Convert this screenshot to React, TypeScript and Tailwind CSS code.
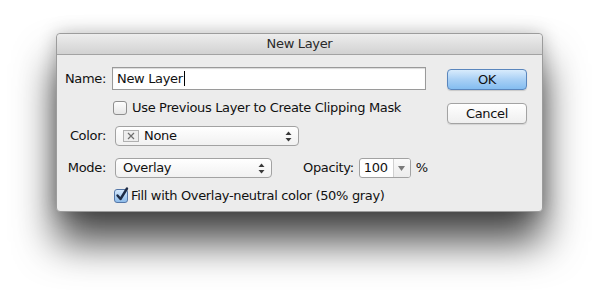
import React from 'react';

const font = { fontFamily: '"Lucida Grande", "DejaVu Sans", sans-serif' };

const Stepper: React.FC = () => (
    <svg width="7" height="11" viewBox="0 0 7 11" className="shrink-0">
        <path d="M3.5 0.5 L6.5 4 L0.5 4 Z" fill="#3a3a3a" />
        <path d="M3.5 10.5 L6.5 7 L0.5 7 Z" fill="#3a3a3a" />
    </svg>
);

const Checkbox: React.FC<{ checked?: boolean }> = ({ checked }) => {
    if (checked) {
        return (
            <div className="relative w-[14px] h-[14px] shrink-0 rounded-[3px] border border-[#5577a8] bg-gradient-to-b from-[#d5e8fb] to-[#8dbbe9]">
                <svg width="16" height="16" viewBox="0 0 16 16" className="absolute -top-[4px] left-[0px]">
                    <path d="M2.5 9.5 L5.5 13 L12 2.5" fill="none" stroke="#1d2b45" strokeWidth="2.4" strokeLinecap="round" strokeLinejoin="round" />
                </svg>
            </div>
        );
    }
    return (
        <div className="w-[14px] h-[14px] shrink-0 rounded-[3px] border border-[#8e8e8e] bg-gradient-to-b from-[#fdfdfd] to-[#e6e6e6]" />
    );
};

export default function App() {
    return (
        <div className="w-[600px] h-[290px] bg-white overflow-hidden pt-[33px] pl-[56px] text-[13px] tracking-[-0.33px] text-[#111]" style={font}>
            <div className="w-[487px] h-[179px] flex flex-col bg-[#ececec] border border-[#9c9c9c] rounded-[4px] shadow-[0_30px_40px_rgba(0,0,0,0.72),0_0_18px_rgba(0,0,0,0.22)]">
                {/* title bar */}
                <div className="h-[21px] shrink-0 flex items-center justify-center rounded-t-[4px] border-b border-[#a3a3a3] bg-gradient-to-b from-[#ededed] to-[#d2d2d2] text-[#2a2a2a]">
                    New Layer
                </div>

                <div className="flex flex-1">
                    {/* form */}
                    <div className="flex flex-col pt-[12px]">
                        <div className="flex items-center h-[23px]">
                            <span className="w-[49px] text-right">Name:</span>
                            <div className="ml-[6px] w-[314px] h-[23px] bg-white border border-[#9a9a9a] shadow-[inset_0_1px_1px_rgba(0,0,0,0.15)] flex items-center pl-[4px]">
                                New Layer<span className="w-[1px] h-[15px] bg-black ml-[1px]" />
                            </div>
                        </div>

                        <div className="flex items-center h-[16px] mt-[10px] pl-[56px] gap-[5px]">
                            <Checkbox />
                            <span>Use Previous Layer to Create Clipping Mask</span>
                        </div>

                        <div className="flex items-center h-[20px] mt-[10px]">
                            <span className="w-[49px] text-right">Color:</span>
                            <div className="ml-[9px] w-[184px] h-[20px] rounded-[4px] border border-[#a2a2a2] bg-gradient-to-b from-white to-[#f1f1f1] flex items-center pl-[7px] pr-[6px]">
                                <div className="w-[16px] h-[12px] border border-[#b0b0b0] bg-[#ededed] flex items-center justify-center">
                                    <svg width="8" height="8" viewBox="0 0 8 8">
                                        <path d="M1 1 L7 7 M7 1 L1 7" stroke="#6e6e6e" strokeWidth="1.2" />
                                    </svg>
                                </div>
                                <span className="ml-[5px] flex-1">None</span>
                                <Stepper />
                            </div>
                        </div>

                        <div className="flex items-center h-[20px] mt-[12px]">
                            <span className="w-[49px] text-right">Mode:</span>
                            <div className="ml-[9px] w-[157px] h-[20px] rounded-[4px] border border-[#a2a2a2] bg-gradient-to-b from-white to-[#f1f1f1] flex items-center pl-[7px] pr-[6px]">
                                <span className="flex-1">Overlay</span>
                                <Stepper />
                            </div>
                            <span className="ml-[31px]">Opacity:</span>
                            <div className="ml-[5px] w-[52px] h-[20px] rounded-[3px] border border-[#a2a2a2] bg-white flex items-stretch overflow-hidden">
                                <span className="flex-1 flex items-center pl-[4px]">100</span>
                                <div className="w-[17px] border-l border-[#d0d0d0] bg-gradient-to-b from-[#fafafa] to-[#ececec] flex items-center justify-center">
                                    <svg width="7" height="5" viewBox="0 0 7 5">
                                        <path d="M0 0 L7 0 L3.5 5 Z" fill="#7a7a7a" />
                                    </svg>
                                </div>
                            </div>
                            <span className="ml-[5px]">%</span>
                        </div>

                        <div className="flex items-center h-[15px] mt-[10px] pl-[57px] gap-[3px]">
                            <Checkbox checked />
                            <span>Fill with Overlay-neutral color (50% gray)</span>
                        </div>
                    </div>

                    {/* buttons */}
                    <div className="ml-auto pr-[15px] pt-[14px] flex flex-col gap-[13px]">
                        <button className="w-[80px] h-[21px] rounded-[4px] border border-[#5a86bd] bg-gradient-to-b from-[#d8ebfc] via-[#a9d0f5] to-[#84bdf0] shadow-[0_1px_1px_rgba(0,0,0,0.15)] leading-none">
                            OK
                        </button>
                        <button className="w-[80px] h-[21px] rounded-[4px] border border-[#a3a3a3] bg-gradient-to-b from-white to-[#efefef] shadow-[0_1px_1px_rgba(0,0,0,0.1)] leading-none">
                            Cancel
                        </button>
                    </div>
                </div>
            </div>
        </div>
    );
}
